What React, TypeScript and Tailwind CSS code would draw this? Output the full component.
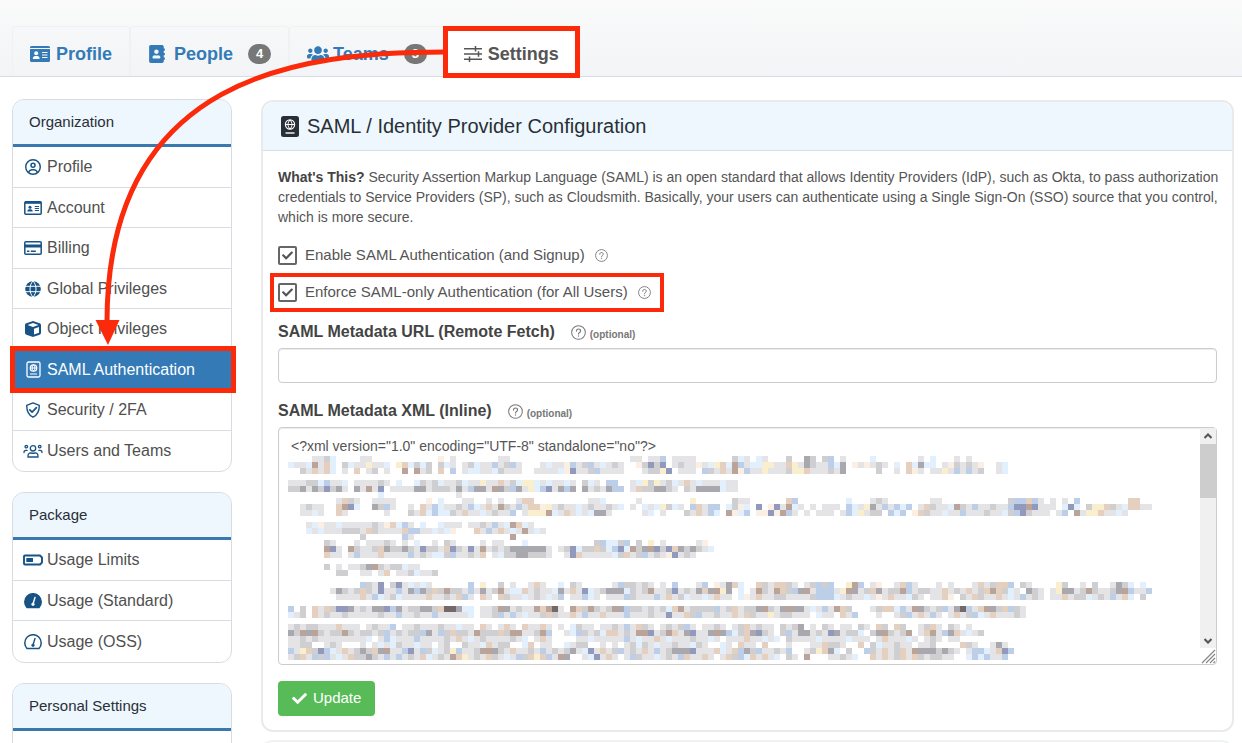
import type { ReactNode } from 'react'
import { FaAddressBook, FaCheck, FaUsers } from 'react-icons/fa'
import { FaCube, FaRegCircleUser } from 'react-icons/fa6'

type IconName =
  | 'user'
  | 'idCard'
  | 'card'
  | 'globe'
  | 'cube'
  | 'passport'
  | 'shield'
  | 'users'
  | 'battery'
  | 'gauge'
  | 'gaugeOutline'

interface NavItem {
  label: string
  icon: IconName
  active?: boolean
}

const ORGANIZATION: NavItem[] = [
  { label: 'Profile', icon: 'user' },
  { label: 'Account', icon: 'idCard' },
  { label: 'Billing', icon: 'card' },
  { label: 'Global Privileges', icon: 'globe' },
  { label: 'Object Privileges', icon: 'cube' },
  { label: 'SAML Authentication', icon: 'passport', active: true },
  { label: 'Security / 2FA', icon: 'shield' },
  { label: 'Users and Teams', icon: 'users' },
]

const PACKAGE: NavItem[] = [
  { label: 'Usage Limits', icon: 'battery' },
  { label: 'Usage (Standard)', icon: 'gauge' },
  { label: 'Usage (OSS)', icon: 'gaugeOutline' },
]

// Redacted XML: one entry per row of 6px cells, one letter per cell
const MOSAIC: [number, string][] = [
  [0, '....gghb....gg...........p.g.......gg....................gg.ggB.gggg......hbg.bg...h..kh.hB.g....b.......g.b...g.g'],
  [1, 'bggbRgPb.hbggyggb.yPbhbh.hbg.ghbggBghBg...gbggpBghBgbghg..phNhN.ghggpgbyPbRBgbbyyggPygkhggBbk.pgpghg.b.Pbkbb.gphghgp..gb'],
  [2, '..hgPgPb.g.P.gh.g..R.Rgh.P.B.gbbggbhggg..ggggbpNgghBgggg...ghhyN.ggg.BhgPgRpBggyggghyyPggghgk.....h..g.Ppg.ggygBgBgh..gb'],
  [4, 'ggghhbBggb.gggghg.b..bhghbgghbggyggPghbyybgbggbg.hbg.BB..gbyhyghbgPgbgggbgg'],
  [5, 'hhkgkhNhkg.kgRgN.ggggkkghhhgkgBkkgRkhBkgybBNgkBk.kghgkBB.gPhhkkhg.hgkkkkbgg'],
  [6, '...............b............g'],
  [7, '........gPhg..gggg.....p.b...gg..g.g..gPP.........ggb.....g........y......hgg......PB........b...ghg.......gg...........hBBPBg.g.g.B........PP'],
  [8, '..ghgg..PRNb..khBg..g.PgBbgghgBbgPgRhgBgPPpyghggbghgghgb.g.bgbyhbg.BPgBB.bhpb.N.pNgRbg.g.ggg.BbgykgBgBbB.gPhggbRhgBgghggBNNRNggg.bNb.hyyPhgbPPgg'],
  [9, '..ggbg..Pg......g...hgPbBbbhgPggbghggB.gyyyRbgPgbgbkkg.....gb.g...hgPgBb.RpbB.ppNpRBg.g.ggg.gBbyghh.BbB.pPhggbggBggghggbhBNhggg.gB.RgyyPggbg'],
  [11, '...gbpggbggggghgpPbBg.b..bggg.gghgBgbRPbg'],
  [12, '...bgbggghhhgPhggggPBBggbgbp...PgBgPgbgRgbg'],
  [13, '............h......Bg................R'],
  [14, '......hg...g.ggghg.g.b..g.hg....g.gg...b...........hBbbhB.h.y.g.....gp'],
  [15, '......RNg.RhgghPkhhkhgNhhgPNhgNgRghghkkkkkkg.ghNbhhPhbBNbRhkRNhNPkhkhgb'],
  [16, '......Pgg.gBgggPggggBghgbbhBgghgP.gbhhkkhhhg..gNPgggggbhPghBghgpNghg'],
  [18, '......h.g.gghkRhghhbgg'],
  [19, '........hh..gg.gP.gghbggh'],
  [21, '............BhgN.hNgbgbg......B.y..h.g..gPg..b.hg.....gBhhghg.g.B...gB.pgkPb..PhgPPhg.ghBhB..yRB.gp..gPBg...g.g...gPghPPB.hg....yh..g.h..gkhb.b'],
  [22, '.......gkhghPhgNggBgkBkhPhRhhgBgkghRgbbPghggbkgPgNbghkkkbhghRgghNghgkPkRyk.b.gRhgRPhBkRgBBBgyRkghPkghhRBghhggPghgPghPRPhbg.khg.gykkghRhgghkRBggB'],
  [23, '........ggggPgBbghbggggPgghgPBg.Pg.PhggbghgbgB.ggBbg.gggBhgggBgPghbggbgPgg.bpgPgghhgggghBBBbghggbgpgPggbhg.ggPp.hgPhggPgbgBghg.ggPghhbghgBgPb.h'],
  [25, 'B.h.PgPhNNkghgkkNBkghhkkhPKKkbb.gghRkghggRPRKg.RPhRhghRkBhhghghbPRghhhhBghPghhkRhgkRkkgbgBgRPh...ghPPbBgRkhghBgkKBgPRkhPBhg'],
  [26, 'bgh.PghgghggggghggBgghggBgggggb.gghBgBgbgghPhggPgBggPgggBggghggNggPhBgghggPgPhggyghhggg.bgg.PgB...g..ghBgPgBg.gPghBbgPggghg'],
  [28, 'ghghhgggPggg.ghggB.gghggghggbgg.Pg.gPg.PggPg.g.bhgg.gghgBgPhg.ghghBg.gghg.ghPghgg.hghk.g.hg.gg.hg.Ph.Ph..ghPg.hg.g'],
  [29, 'khRkRhghhRhghhghBghghhBkgBhPhhgRhhhPhRRgghRB..gbBhghbPPghgRRNghRPgkNggkRkBbhPkNhg.hBgkkghgNkghhb.hkRhghR.gPRgBkPgbgh'],
  [30, 'gghghggggggggb.gBbgggBgggghgPgbghgggghgb.gPg....ggbgggggBgbggPgbggghggbg.gggPggbgb.hggggbggggbggg.gPgggbg.ghg.gg'],
  [31, 'gghh..ghg...g.gbgbhggbgg.gh..hggbPghh..bP.gg..bghh..g.g.ghbhgbgghggbhg..bg.Pgg.P...g...ggPhhg..P.hbgghgg.ggh....Phg..gkg'],
  [32, 'BgyPhNBbgPghkhPkRggBNgBhbghyBgghRRkhgPgghgBghghkgbNgPghBghgPgBghkkkNgggPbgPBkhBgghgB..ghyPkb.h..BhgPghPgRkkkhkhg.gBBbgPNB'],
  [33, 'ghPgBhBgbgPhhkhgBgBghgPbghgRPyghgPhgbgBhPyPBgRk..gbNgPg.gBhggbghgBPggPg.gPhBbPgPgb.hg.R...gghgb..PgPghPgPhghhgg..bBbBggB'],
]

const MOSAIC_COLOR: Record<string, string> = {
  g: '#e4e3e6',
  h: '#cfcfd2',
  k: '#a8a8ae',
  K: '#73696b',
  b: '#e2effc',
  B: '#bdcee8',
  N: '#9199bd',
  p: '#fbeee3',
  P: '#e5d0c0',
  R: '#baa398',
  y: '#f9efcf',
}

function PassportOutline() {
  return (
    <svg viewBox="0 0 15 17" className="h-[17px] w-[15px]" fill="none" stroke="currentColor" strokeWidth="1.3">
      <rect x="1" y="1" width="13" height="15" rx="1.5" />
      <circle cx="7.5" cy="7" r="3.2" />
      <path d="M4.3 7h6.4M7.5 3.8c-1.8 2-1.8 4.4 0 6.4M7.5 3.8c1.8 2 1.8 4.4 0 6.4M4 13h7" strokeWidth="1" />
    </svg>
  )
}

function Passport() {
  return (
    <svg viewBox="0 0 18 21" className="h-[21px] w-[18px]" fill="none" stroke="#fff">
      <rect x="0" y="0" width="18" height="21" rx="2.5" fill="#292f36" stroke="none" />
      <circle cx="9" cy="8.5" r="4.6" strokeWidth="1.2" />
      <path d="M4.4 8.5h9.2M9 3.9c-2.6 2.8-2.6 6.4 0 9.2M9 3.9c2.6 2.8 2.6 6.4 0 9.2" strokeWidth="1" />
      <path d="M4.5 17h9" strokeWidth="1.4" />
    </svg>
  )
}

function Globe() {
  return (
    <svg viewBox="0 0 16 16" className="size-4">
      <circle cx="8" cy="8" r="7.8" fill="currentColor" />
      <path
        d="M0 5.3h16M0 10.7h16M5 8c0-3 1-6 3-8M5 8c0 3 1 6 3 8M11 8c0-3-1-6-3-8M11 8c0 3-1 6-3 8"
        fill="none"
        stroke="#fff"
        strokeWidth="1"
      />
    </svg>
  )
}

function Gauge({ filled }: { filled: boolean }) {
  return (
    <svg viewBox="0 0 18 16" className="h-4 w-[18px]" stroke="currentColor">
      <path
        d="M3 14.5a8.200 8.200 0 1 1 12 0z"
        fill={filled ? 'currentColor' : 'none'}
        strokeWidth="1.5"
        strokeLinejoin="round"
      />
      <g stroke={filled ? '#fff' : 'currentColor'} fill={filled ? '#fff' : 'currentColor'}>
        <path d="M11 4.5 9.3 10" strokeWidth="1.4" strokeLinecap="round" />
        <circle cx="9" cy="11.3" r="1.4" strokeWidth="0.4" />
      </g>
    </svg>
  )
}

function IdCard({ className }: { className: string }) {
  return (
    <svg viewBox="0 0 20 16" className={className}>
      <path d="M1.5 0h17A1.5 1.5 0 0 1 20 1.5V2H0v-.5A1.5 1.5 0 0 1 1.5 0z" fill="currentColor" />
      <path d="M0 3h20v11.5a1.5 1.5 0 0 1-1.5 1.5h-17A1.5 1.5 0 0 1 0 14.5z" fill="currentColor" />
      <circle cx="6.2" cy="7.2" r="2" fill="#fff" />
      <path d="M2.8 13c0-2 1-3 2.4-3h2c1.4 0 2.4 1 2.4 3z" fill="#fff" />
      <path d="M12 6.5h5.5M12 9h5.5M12 11.5h5.5" stroke="#fff" strokeWidth="1" />
    </svg>
  )
}

function NavIcon({ name }: { name: IconName }) {
  switch (name) {
    case 'user':
      return <FaRegCircleUser className="size-4" />
    case 'idCard':
      return (
        <svg viewBox="0 0 18 14" className="h-[14px] w-[18px]">
          <rect x="0.8" y="0.8" width="16.4" height="12.4" rx="1" fill="none" stroke="currentColor" strokeWidth="1.5" />
          <path d="M1 0.5h16v2.3H1z" fill="currentColor" />
          <circle cx="6" cy="6.2" r="1.5" fill="currentColor" />
          <path d="M3.3 10.5c0-1.5 1-2.2 1.900-2.200h1.600c.9 0 1.900.7 1.900 2.200z" fill="currentColor" />
          <path d="M10.8 5.5H15M10.8 7.5H15M10.8 9.5H15" stroke="currentColor" strokeWidth="1" />
        </svg>
      )
    case 'card':
      return (
        <svg viewBox="0 0 18 14" className="h-[14px] w-[18px]">
          <rect x="0.8" y="0.8" width="16.4" height="12.4" rx="1" fill="none" stroke="currentColor" strokeWidth="1.5" />
          <path d="M1 3.500h16v3H1z" fill="currentColor" />
          <path d="M3 10.3h2.4M6.8 10.3h5" stroke="currentColor" strokeWidth="1.4" />
        </svg>
      )
    case 'globe':
      return <Globe />
    case 'cube':
      return <FaCube className="size-4" />
    case 'passport':
      return <PassportOutline />
    case 'shield':
      return (
        <svg viewBox="0 0 16 16" className="size-4" fill="none" stroke="currentColor" strokeLinecap="round" strokeLinejoin="round">
          <path d="M8 .9 14.3 3.4C14.3 9 12.5 13 8 15.2 3.5 13 1.7 9 1.7 3.4z" strokeWidth="1.4" />
          <path d="m4.8 7.8 2.3 2.3 4.3-4.5" strokeWidth="1.7" />
        </svg>
      )
    case 'users':
      return (
        <svg viewBox="0 0 20 14" className="h-[14px] w-5" fill="none" stroke="currentColor" strokeWidth="1.3" strokeLinecap="round">
          <circle cx="10" cy="4.3" r="2.7" />
          <circle cx="3.3" cy="2.6" r="1.3" />
          <circle cx="16.7" cy="2.6" r="1.3" />
          <path d="M5 13c-.3-3 1-4.2 2.8-4.2 1.4.6 3 .6 4.4 0C14 8.8 15.3 10 15 13zM1 8.5c0-1.5.8-2.2 1.8-2.2h1.4M19 8.500c0-1.500-.8-2.200-1.800-2.200h-1.400" />
        </svg>
      )
    case 'battery':
      return (
        <svg viewBox="0 0 20 12" className="h-3 w-5">
          <path d="M2 1.500h15l2 2v5l-2 2H2A1 1 0 0 1 1 9.500v-7a1 1 0 0 1 1-1z" fill="none" stroke="currentColor" strokeWidth="1.9" strokeLinejoin="round" />
          <path d="M3.300 4h6.700v4H3.300z" fill="currentColor" />
        </svg>
      )
    case 'gauge':
      return <Gauge filled />
    case 'gaugeOutline':
      return <Gauge filled={false} />
  }
}

function HelpIcon({ className }: { className: string }) {
  return (
    <svg viewBox="0 0 16 16" className={className} fill="none" stroke="#777" role="img" aria-label="Help">
      <circle cx="8" cy="8" r="7.300" strokeWidth="1.100" />
      <path d="M5.800 6.500c0-1.300.9-2.200 2.200-2.200s2.200.8 2.200 2c0 1.600-2.200 1.700-2.200 3.300" strokeWidth="1.200" strokeLinecap="round" />
      <circle cx="8" cy="11.700" r=".5" fill="#777" strokeWidth=".5" />
    </svg>
  )
}

function NavCard({ title, items, listClass }: { title: string; items: NavItem[]; listClass: string }) {
  return (
    <section className="rounded-xl border border-[#d8dce0] bg-white">
      <h2 className="flex h-11 items-center rounded-t-xl bg-[#eef6fe] px-4 text-[15px] text-[#292f36]">{title}</h2>
      <ul className={`grid auto-rows-fr border-t-[3px] border-[#3a78b0] ${listClass}`}>
        {items.map((item) => (
          <li key={item.label} className="relative border-b border-[#d8dce0] last:border-b-0">
            <a
              href="#"
              className={`flex h-full items-center gap-1 pt-px pl-2.5 text-base ${
                item.active ? 'bg-[#337ab7] text-white' : 'text-[#505050]'
              }`}
            >
              <span className={`flex w-5 justify-center ${item.active ? 'text-white' : 'text-[#175385]'}`}>
                <NavIcon name={item.icon} />
              </span>
              {item.label}
            </a>
            {item.active && (
              <span className="pointer-events-none absolute -inset-y-1 -right-[5px] -left-[3px] border-5 border-[#fa2a0a]" />
            )}
          </li>
        ))}
      </ul>
    </section>
  )
}

function CheckField({ id, children }: { id: string; children: ReactNode }) {
  return (
    <div className="flex items-center text-[15px] text-[#555]">
      <span className="relative flex">
        <input
          id={id}
          type="checkbox"
          defaultChecked
          className="peer size-[19px] appearance-none rounded-[2px] border-2 border-[#666] bg-white"
        />
        <FaCheck className="pointer-events-none absolute inset-1 hidden size-[11px] text-[#555] peer-checked:block" />
      </span>
      <label htmlFor={id} className="ml-2">
        {children}
      </label>
      <HelpIcon className="ml-2.5 size-[13px]" />
    </div>
  )
}

function FieldLabel({ htmlFor, children }: { htmlFor: string; children: ReactNode }) {
  return (
    <div className="flex h-5 items-center font-bold text-[#444]">
      <label htmlFor={htmlFor} className="text-base">
        {children}
      </label>
      <HelpIcon className="ml-4 size-[15px]" />
      <span className="ml-1 pt-1 text-[10px] text-[#777]">(optional)</span>
    </div>
  )
}

function Mosaic() {
  return (
    <svg viewBox="0 0 864 204" className="pointer-events-none absolute top-7 left-[9px] h-[204px] w-[864px]" aria-hidden="true">
      {MOSAIC.map(([row, cells]) =>
        [...cells].map((cell, col) =>
          cell === '.' ? null : (
            <rect key={`${row}-${col}`} x={col * 6} y={row * 6} width="6" height="6" fill={MOSAIC_COLOR[cell]} />
          ),
        ),
      )}
    </svg>
  )
}

function Tab({ children }: { children: ReactNode }) {
  return (
    <a href="#" className="flex h-full items-center rounded-t border border-b-0 border-[#f0f1f3] px-[17px] pt-1 text-[#337ab7]">
      {children}
    </a>
  )
}

function CountBadge({ children }: { children: ReactNode }) {
  return (
    <span className="ml-[15px] flex h-5 w-[23px] items-center justify-center rounded-full bg-[#777] text-[13px] leading-5 text-white">
      {children}
    </span>
  )
}

export default function App() {
  return (
    <div className="relative h-screen overflow-hidden bg-white font-['Liberation_Sans',Arial,sans-serif]">
      <header className="border-b border-[#d9dce0] bg-gradient-to-b from-[#f9faf9] to-[#f3f4f7] pt-[26px] pl-3">
        <nav className="flex h-[50px] text-lg font-bold">
          <Tab>
            <IdCard className="mr-1.5 h-4 w-5" />
            Profile
          </Tab>
          <Tab>
            <FaAddressBook className="mr-2 size-[18px]" />
            People
            <CountBadge>4</CountBadge>
          </Tab>
          <Tab>
            <FaUsers className="mr-1 size-[22px]" />
            Teams
            <CountBadge>3</CountBadge>
          </Tab>
          <a
            href="#"
            aria-current="page"
            className="-ml-0.5 flex h-[52px] items-center gap-1.5 border-5 border-[#fa2a0a] bg-white px-4 pt-1 text-[#555]"
          >
            <svg viewBox="0 0 18 16" className="h-4 w-[18px]" fill="none" stroke="currentColor" strokeWidth="1.5">
              <path d="M0 2.700h18M0 8h18M0 13.300h18M11.500 0v5.400M14.500 5.300v5.400M5.500 10.600V16" />
            </svg>
            Settings
          </a>
        </nav>
      </header>

      <div className="flex items-start gap-[29px] pt-[22px] pr-2 pl-3">
        <aside className="flex w-[220px] shrink-0 flex-col gap-5">
          <NavCard title="Organization" items={ORGANIZATION} listClass="h-[327px]" />
          <NavCard title="Package" items={PACKAGE} listClass="h-[125px]" />
          <NavCard title="Personal Settings" items={[]} listClass="h-10" />
        </aside>

        <div className="mt-px flex grow flex-col gap-2">
          <main className="rounded-xl border-2 border-[#e8eaec]">
            <h1 className="flex h-[49px] items-center gap-2 rounded-t-xl border-b border-[#d5e0ea] bg-[#eef7fe] px-[18px] text-xl text-[#292f36]">
              <Passport />
              SAML / Identity Provider Configuration
            </h1>
            <form className="px-[15px] pt-4 pb-3.5" onSubmit={(e) => e.preventDefault()}>
              <p className="-mr-3 text-sm leading-5 text-[#555]">
                <strong className="text-[#444]">What&apos;s This?</strong> Security Assertion Markup Language (SAML) is
                an open standard that allows Identity Providers (IdP), such as Okta, to pass authorization credentials
                to Service Providers (SP), such as Cloudsmith. Basically, your users can authenticate using a Single
                Sign-On (SSO) source that you control, which is more secure.
              </p>

              <div className="mt-4 flex h-6 items-center">
                <CheckField id="saml-enabled">Enable SAML Authentication (and Signup)</CheckField>
              </div>
              <div className="mt-1.5 -ml-2 flex h-[39px] w-[394px] items-center border-4 border-[#fa2a0a] pl-1">
                <CheckField id="saml-enforced">Enforce SAML-only Authentication (for All Users)</CheckField>
              </div>

              <div className="mt-2.5">
                <FieldLabel htmlFor="metadata-url">SAML Metadata URL (Remote Fetch)</FieldLabel>
                <input
                  id="metadata-url"
                  type="text"
                  className="mt-1.5 block h-[35px] w-full rounded border border-[#ccc] px-3 text-[15px] shadow-[inset_0_1px_1px_rgba(0,0,0,0.08)]"
                />
              </div>

              <div className="mt-[18px]">
                <FieldLabel htmlFor="metadata-xml">SAML Metadata XML (Inline)</FieldLabel>
                <div className="relative mt-1.5 flex h-[238px] rounded border border-[#ccc] shadow-[inset_0_1px_1px_rgba(0,0,0,0.08)]">
                  <textarea
                    id="metadata-xml"
                    spellCheck={false}
                    defaultValue={'<?xml version="1.0" encoding="UTF-8" standalone="no"?>'}
                    className="grow resize-none overflow-hidden bg-transparent px-3 py-2 text-sm leading-5 text-[#555] outline-none"
                  />
                  <Mosaic />
                  {/* scrollbar with resize grip */}
                  <div className="flex w-4 flex-col items-center text-[#555]" aria-hidden="true">
                    <div className="flex h-4 w-full items-center justify-center bg-[#f0f0f0]">
                      <svg viewBox="0 0 8 6" className="h-1.5 w-2" fill="none" stroke="currentColor" strokeWidth="2">
                        <path d="m.5 5 3.500-3.500L7.500 5" />
                      </svg>
                    </div>
                    <div className="h-[54px] w-full bg-[#cdcdcd]" />
                    <div className="flex w-full grow items-end justify-center bg-[#f0f0f0] pb-1">
                      <svg viewBox="0 0 8 6" className="h-1.5 w-2" fill="none" stroke="currentColor" strokeWidth="2">
                        <path d="m.5 1 3.500 3.500L7.500 1" />
                      </svg>
                    </div>
                    <svg viewBox="0 0 16 16" className="size-4" fill="none" stroke="#888" strokeWidth="1.2">
                      <path d="M2 15 15 2M6 15l9-9M10 15l5-5M13.500 15l1.500-1.500" />
                    </svg>
                  </div>
                </div>
              </div>

              <button
                type="submit"
                className="mt-4 flex h-[35px] items-center gap-1.5 rounded bg-[#57bb58] px-3.5 text-[15px] text-white"
              >
                <FaCheck className="size-[15px]" />
                Update
              </button>
            </form>
          </main>
          <div className="h-10 rounded-xl border-2 border-[#f0f1f2]" />
        </div>
      </div>

      {/* callout arrow from the Settings tab to SAML Authentication */}
      <svg
        viewBox="0 0 460 360"
        className="pointer-events-none absolute top-0 left-0 h-[360px] w-[460px]"
        aria-hidden="true"
      >
        <path d="M445 52C300 52 107 75 107 322" fill="none" stroke="#fa2a0a" strokeWidth="5" />
        <path d="M95.500 320h24L108 345z" fill="#fa2a0a" />
      </svg>
    </div>
  )
}
